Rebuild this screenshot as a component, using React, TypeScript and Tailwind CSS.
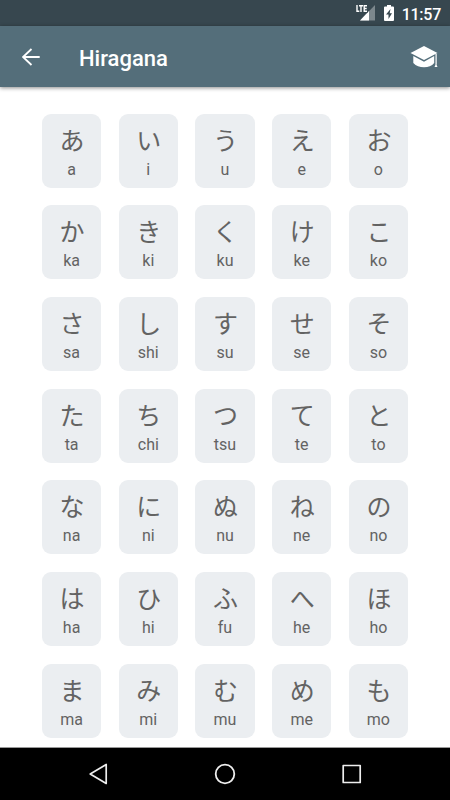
const kana: [string, string][] = [
  ['あ', 'a'], ['い', 'i'], ['う', 'u'], ['え', 'e'], ['お', 'o'],
  ['か', 'ka'], ['き', 'ki'], ['く', 'ku'], ['け', 'ke'], ['こ', 'ko'],
  ['さ', 'sa'], ['し', 'shi'], ['す', 'su'], ['せ', 'se'], ['そ', 'so'],
  ['た', 'ta'], ['ち', 'chi'], ['つ', 'tsu'], ['て', 'te'], ['と', 'to'],
  ['な', 'na'], ['に', 'ni'], ['ぬ', 'nu'], ['ね', 'ne'], ['の', 'no'],
  ['は', 'ha'], ['ひ', 'hi'], ['ふ', 'fu'], ['へ', 'he'], ['ほ', 'ho'],
  ['ま', 'ma'], ['み', 'mi'], ['む', 'mu'], ['め', 'me'], ['も', 'mo'],
]

function StatusBar() {
  return (
    <div className="flex h-[26px] shrink-0 items-center justify-end bg-[#37474f] pr-[9px] text-white">
      <svg width="20" height="18" viewBox="0 0 20 18" fill="none" className="mr-[8px]">
        <path d="M19 1v15.500H4z" fill="#fff" fillOpacity=".35" />
        <path d="M13 7v9.500H4z" fill="#fff" />
        <path d="M0 0h12v8.500H0z" fill="#37474f" />
        <path d="M1 1v6.300h2.300M3 1.700h4M5 1.600V8M11 1.700H8.200v5.600H11M8.200 4.500h2.500" stroke="#fff" strokeWidth="1.4" />
      </svg>
      <svg width="10" height="18" viewBox="0 0 10 18" className="mr-[8px]">
        <path d="M3 1h4v1.600h2q1 0 1 1V16q0 1-1 1H1q-1 0-1-1V3.600q0-1 1-1h2z" fill="#fff" />
        <path d="M6.500 5 2 10.500h2.500V15L8 9.200H5.700z" fill="#37474f" />
      </svg>
      <span className="pt-[3px] text-[16px] font-medium leading-none tracking-[-0.25px]">11:57</span>
    </div>
  )
}

function Header() {
  return (
    <header className="z-10 flex h-[61px] shrink-0 items-center bg-[#546e7a] pl-[22px] pr-[12px] text-white shadow-[0_1px_4px_rgba(0,0,0,0.45)]">
      <svg width="18" height="18" viewBox="0 0 18 18" fill="none" stroke="#fff" strokeWidth="1.8">
        <path d="M17.700 9H1M9.500 1 1 9l8.500 8" />
      </svg>
      <h1 className="ml-[39px] pt-[4px] text-[22px] font-medium leading-none">Hiragana</h1>
      <svg width="28" height="24" viewBox="0 0 28 24" fill="#fff" className="ml-auto">
        <path d="M14 1 .5 8 14 15l13.500-7z" />
        <path d="M3.300 11 14 16.700 24.200 11v7Q20.500 22.300 14 22.300T3.300 18z" />
        <path d="M25.500 9h1.200v10.500h-1.200z" />
        <path d="M26 18.500 27.500 22h-3z" />
      </svg>
    </header>
  )
}

function NavBar() {
  return (
    <nav className="z-10 flex h-[53px] shrink-0 items-center justify-between border-t border-[#999] bg-black px-[87px]">
      <svg width="22" height="22" viewBox="0 0 22 22" fill="none" stroke="#eee" strokeWidth="1.700" strokeLinejoin="round">
        <path d="M19.200 1.500v19L3.200 11z" />
      </svg>
      <svg width="22" height="22" viewBox="0 0 22 22" fill="none" stroke="#eee" strokeWidth="1.800">
        <circle cx="11" cy="11" r="9.300" />
      </svg>
      <svg width="22" height="22" viewBox="0 0 22 22" fill="none" stroke="#eee" strokeWidth="1.700" strokeLinejoin="round">
        <path d="M2.200 2.500h17v17h-17z" />
      </svg>
    </nav>
  )
}

export default function App() {
  return (
    <div className="flex h-[800px] w-[450px] flex-col overflow-hidden bg-white font-[Roboto,'Noto_Sans_CJK_JP',sans-serif]">
      <StatusBar />
      <Header />
      <main className="grid min-h-0 flex-1 auto-rows-[74px] grid-cols-5 gap-x-[17.500px] gap-y-[17.650px] overflow-hidden px-[42px] pt-[26.800px]">
        {kana.map(([char, romaji]) => (
          <div key={romaji} className="flex flex-col items-center rounded-[9px] bg-[#ebeef1] text-[#636363]">
            <span lang="ja" className="mt-[11px] pl-px font-['Noto_Sans_CJK_JP',sans-serif] text-[25px] leading-[28px]">{char}</span>
            <span className="mt-[7px] text-[16px] leading-[19px]">{romaji}</span>
          </div>
        ))}
      </main>
      <NavBar />
    </div>
  )
}
